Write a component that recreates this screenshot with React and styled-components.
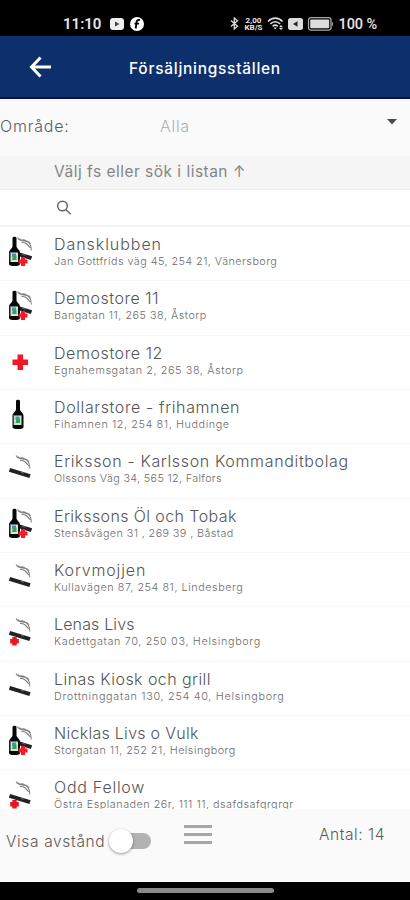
import React from 'react';
import styled, { createGlobalStyle } from 'styled-components';

const GlobalStyle = createGlobalStyle`
  * {
    box-sizing: border-box;
  }

  body {
    margin: 0;
    background: #000;
    font-family: Inter, 'Open Sans', sans-serif;
  }
`;

const Screen = styled.div`
  width: 410px;
  height: 900px;
  display: flex;
  flex-direction: column;
  overflow: hidden;
  background: #fff;
`;

const Text = styled.span`
  letter-spacing: ${({ $track }) => $track || 0}px;
  white-space: nowrap;
`;

const StatusBar = styled.div`
  flex: none;
  height: 36px;
  padding: 11px 33px 0 63px;
  display: flex;
  justify-content: space-between;
  background: #000;
  color: #e6e6e6;
`;

const StatusGroup = styled.div`
  height: 25px;
  display: flex;
  align-items: center;
  gap: ${({ $gap }) => $gap}px;
`;

const Clock = styled(Text)`
  margin-right: 3px;
  font: 600 15px/20px Roboto, sans-serif;
`;

const Battery = styled(Text)`
  margin-top: 2px;
  font: 500 14.5px/20px Roboto, sans-serif;
`;

const Speed = styled.div`
  width: 20px;
  font: 700 8px/7px Roboto, sans-serif;
  text-align: center;
`;

const AppBar = styled.header`
  flex: none;
  height: 63px;
  padding: 0 28px;
  display: grid;
  grid-template-columns: 24px 1fr 24px;
  align-items: center;
  background: #0d2f6c;
  border-bottom: 2px solid #06104f;
  color: #fff;
`;

const AppTitle = styled.h1`
  margin: 3px 0 0;
  font-size: 15.5px;
  font-weight: 500;
  text-align: center;
`;

const Filter = styled.div`
  flex: none;
  height: 57px;
  padding: 0 13px 3px 0;
  display: grid;
  grid-template-columns: 160px 1fr 10px;
  align-items: center;
  background: #fafafa;
  color: #5c5c5c;
  font-size: 16px;
  font-weight: 300;
`;

const FilterValue = styled(Text)`
  color: #b0b0b0;
`;

const Caret = styled.svg`
  margin-top: -8px;
`;

const ListHeader = styled.div`
  flex: none;
  height: 34px;
  padding: 0 0 2px 54px;
  display: flex;
  align-items: center;
  background: #f5f5f5;
  border-bottom: 1px solid #efefef;
  color: #858585;
  font-size: 15.5px;
`;

const Search = styled.div`
  flex: none;
  height: 37px;
  padding-left: 56px;
  display: flex;
  align-items: center;
  border-bottom: 2px solid #f4f4f4;
`;

const List = styled.ul`
  height: 582px;
  margin: 0;
  padding: 0;
  list-style: none;
  overflow: hidden;
`;

const Row = styled.li`
  height: 54.35px;
  display: grid;
  grid-template-columns: 54px 1fr;
  border-bottom: 1px solid #f7f7f7;
`;

const RowIcon = styled.svg`
  margin: 7px 0 0 6px;
`;

const RowText = styled.div`
  padding-top: 7px;
  display: flex;
  flex-direction: column;
`;

const Name = styled(Text)`
  color: #555;
  font-size: 16px;
  font-weight: 300;
  line-height: 20px;
`;

const Address = styled(Text)`
  margin-top: 1px;
  color: #6c6c6c;
  font-size: 10.8px;
  font-weight: 300;
  line-height: 14px;
`;

const Footer = styled.footer`
  flex: none;
  height: 73px;
  padding: 0 25px 0 6px;
  display: grid;
  grid-template-columns: 104px 74px 30px 1fr;
  align-items: start;
  background: #fafafa;
  color: #5a5a5a;
  font-size: 15.5px;
  font-weight: 300;
`;

const FooterLabel = styled(Text)`
  margin-top: ${({ $top }) => $top}px;
  line-height: 20px;
  text-align: ${({ $align }) => $align || 'left'};
`;

const Switch = styled.div`
  width: 42px;
  height: 26px;
  margin-top: 19px;
  padding: 5px 0;
`;

const SwitchTrack = styled.div`
  width: 34px;
  height: 16px;
  margin-left: 7px;
  display: flex;
  align-items: center;
  border-radius: 8px;
  background: #b2b2b2;
`;

const SwitchThumb = styled.div`
  flex: none;
  width: 24px;
  height: 24px;
  margin-left: -8px;
  border-radius: 50%;
  background: #fff;
  box-shadow: 0 1px 3px rgba(0, 0, 0, 0.4);
`;

const Menu = styled.div`
  width: 28px;
  margin-top: 16px;
  display: flex;
  flex-direction: column;
  gap: 5px;
`;

const MenuLine = styled.div`
  height: 3px;
  background: #a6a6a6;
`;

const NavBar = styled.div`
  flex: none;
  height: 18px;
  padding-top: 6px;
  display: flex;
  justify-content: center;
  background: #000;
`;

const NavHandle = styled.div`
  width: 137px;
  height: 5px;
  border-radius: 3px;
  background: #898989;
`;

const stores = [
  { name: 'Dansklubben', track: 0.95, address: 'Jan Gottfrids väg 45, 254 21, Vänersborg', addressTrack: 0.45, kind: 'all' },
  { name: 'Demostore 11', track: 0.55, address: 'Bangatan 11, 265 38, Åstorp', addressTrack: 0.5, kind: 'all' },
  { name: 'Demostore 12', track: 0.58, address: 'Egnahemsgatan 2, 265 38, Åstorp', addressTrack: 0.6, kind: 'cross' },
  { name: 'Dollarstore - frihamnen', track: 0.62, address: 'Fihamnen 12, 254 81, Huddinge', addressTrack: 0.6, kind: 'bottle' },
  { name: 'Eriksson - Karlsson Kommanditbolag', track: 0.65, address: 'Olssons Väg 34, 565 12, Falfors', addressTrack: 0.33, kind: 'smoke' },
  { name: 'Erikssons Öl och Tobak', track: 0.4, address: 'Stensåvägen 31 , 269 39 , Båstad', addressTrack: 0.4, kind: 'all' },
  { name: 'Korvmojjen', track: 0.84, address: 'Kullavägen 87, 254 81, Lindesberg', addressTrack: 0.55, kind: 'smoke' },
  { name: 'Lenas Livs', track: 0.15, address: 'Kadettgatan 70, 250 03, Helsingborg', addressTrack: 0.66, kind: 'smokeCross' },
  { name: 'Linas Kiosk och grill', track: 0.43, address: 'Drottninggatan 130, 254 40, Helsingborg', addressTrack: 0.7, kind: 'smoke' },
  { name: 'Nicklas Livs o Vulk', track: 0.28, address: 'Storgatan 11, 252 21, Helsingborg', addressTrack: 0.47, kind: 'all' },
  { name: 'Odd Fellow', track: 0.74, address: 'Östra Esplanaden 26r, 111 11, dsafdsafgrgrgr', addressTrack: 0.5, kind: 'smokeCross' },
];

const Cigarette = () => (
  <g>
    <path d="M3.5 17.8 L24 24.2" stroke="#222" strokeWidth="4" />
    <path d="M15 20.3 L18 21.2" stroke="#666" strokeWidth="1.2" />
    <path
      d="M10 3.5 C12 7 14 7 16.5 7 C21 7 23.8 9.5 23.8 16.5 M12 4.5 C14 8 15 4.5 18 6.5 C20 8.5 21 6 23 10 M14 8.5 C18 8 20 10.5 22.8 14"
      fill="none"
      stroke="#808080"
      strokeWidth="1.1"
    />
  </g>
);

const Bottle = ({ x }) => (
  <g transform={`translate(${x} 0)`}>
    <path
      d="M3.5 4 Q3.5 2.8 5.5 2.8 Q7.5 2.8 7.5 4 V12 C7.5 15 11 15.5 11 19 V30 Q11 32 5.5 32 Q0 32 0 30 V19 C0 15.5 3.5 15 3.5 12 Z"
      fill="#070707"
    />
    <path d="M1.5 18.5 H9 V28 H1.5 Z" fill="#cfe7dc" />
    <path d="M3 19.5 H7 V23 H3 Z" fill="#4596ac" />
    <path d="M4 22 L7.5 21.5 V26 H3 Z" fill="#39a24d" />
    <path d="M1.2 17.5 V28" stroke="#777" strokeWidth="0.7" />
  </g>
);

const StoreIcon = ({ kind }) => (
  <RowIcon width="30" height="36" viewBox="0 0 30 36">
    {(kind === 'smoke' || kind === 'smokeCross') && (
      <g transform="translate(0 1)">
        <Cigarette />
      </g>
    )}
    {kind === 'all' && (
      <g transform="translate(1.5 0)">
        <Cigarette />
      </g>
    )}
    {kind === 'all' && <Bottle x={3} />}
    {kind === 'bottle' && <Bottle x={6.5} />}
    {kind === 'all' && <path d="M17 23 V32 M12.5 27.5 H21.5" stroke="#f5192b" strokeWidth="4" />}
    {kind === 'smokeCross' && <path d="M8.5 22.9 V31.5 M4.2 27.2 H12.8" stroke="#eb1522" strokeWidth="4.4" />}
    {kind === 'cross' && <path d="M14.3 11.5 V27 M6.5 19.2 H22" stroke="#ef1824" strokeWidth="5.6" />}
  </RowIcon>
);

const StoreRow = ({ store }) => (
  <Row>
    <StoreIcon kind={store.kind} />
    <RowText>
      <Name $track={store.track}>{store.name}</Name>
      <Address $track={store.addressTrack}>{store.address}</Address>
    </RowText>
  </Row>
);

const Status = () => (
  <StatusBar>
    <StatusGroup $gap={6}>
      <Clock>11:10</Clock>
      <svg width="14" height="12" viewBox="0 0 14 12">
        <rect width="14" height="12" rx="3" fill="#eee" />
        <path d="M5 3.5 L9.5 6 L5 8.5 Z" fill="#444" />
      </svg>
      <svg width="14" height="14" viewBox="0 0 14 14">
        <circle cx="7" cy="7" r="7" fill="#fff" />
        <path d="M10 3 C7 2.5 6.5 4 6.5 6 L5.7 11.5 M4.5 6.7 H9" fill="none" stroke="#000" strokeWidth="1.8" />
      </svg>
    </StatusGroup>
    <StatusGroup $gap={4}>
      <svg width="9" height="13" viewBox="0 0 9 13">
        <path d="M1 3.5 L7.5 9.3 L4.3 12 V1 L7.5 3.7 L1 9.5" fill="none" stroke="#ddd" strokeWidth="1.3" />
      </svg>
      <Speed>2,00 KB/S</Speed>
      <svg width="17" height="13" viewBox="0 0 17 13">
        <path
          d="M1 4.5 C5 0 11.5 0 15.5 4.5 M3.3 7 C6 4 10.5 4 13.2 7 M5.7 9.3 C7.3 7.8 9.2 7.8 10.8 9.3"
          fill="none"
          stroke="#ddd"
          strokeWidth="1.6"
        />
        <path d="M8.2 12.5 L6.5 10.5 H10 Z M14 8 L16 10.3 H12 Z M14 13 L12 11 H16 Z" fill="#ddd" />
      </svg>
      <svg width="15" height="12" viewBox="0 0 15 12">
        <rect width="15" height="12" rx="2.5" fill="#ddd" />
        <path d="M5 6 L9.5 3.2 V8.8 Z" fill="#222" />
      </svg>
      <svg width="27" height="14" viewBox="0 0 27 14">
        <rect x="1.5" y="0.7" width="22.5" height="12.4" rx="2.5" fill="none" stroke="#aaa" strokeWidth="1.3" />
        <rect x="3.2" y="2.5" width="19" height="8.8" rx="1" fill="#ddd" />
        <path d="M25 4.5 Q27 7 25 9.5 Z" fill="#bbb" />
      </svg>
      <Battery $track={-0.1}>100 %</Battery>
    </StatusGroup>
  </StatusBar>
);

const App = () => (
  <>
    <GlobalStyle />
    <Screen>
      <Status />
      <AppBar>
        <svg width="24" height="22" viewBox="0 0 24 22">
          <path d="M12.5 1.5 L3.5 11 L12.5 20.5 M4 11 H23" fill="none" stroke="#fff" strokeWidth="3" />
        </svg>
        <AppTitle>
          <Text $track={0.72}>Försäljningsställen</Text>
        </AppTitle>
      </AppBar>
      <Filter>
        <Text $track={0.8}>Område:</Text>
        <FilterValue $track={0.7}>Alla</FilterValue>
        <Caret width="10" height="6" viewBox="0 0 10 6">
          <path d="M0 0 H10 L5 5.5 Z" fill="#4a4a4a" />
        </Caret>
      </Filter>
      <ListHeader>
        <Text $track={0.48}>Välj fs eller sök i listan ↑</Text>
      </ListHeader>
      <Search>
        <svg width="16" height="16" viewBox="0 0 16 16" fill="none" stroke="#666" strokeWidth="1.5">
          <circle cx="6.5" cy="6" r="4.8" />
          <path d="M10 9.7 L14.8 14.3" />
        </svg>
      </Search>
      <List>
        {stores.map((store) => (
          <StoreRow key={store.name} store={store} />
        ))}
      </List>
      <Footer>
        <FooterLabel $top={23} $track={0.65}>Visa avstånd</FooterLabel>
        <Switch>
          <SwitchTrack>
            <SwitchThumb />
          </SwitchTrack>
        </Switch>
        <Menu>
          <MenuLine />
          <MenuLine />
          <MenuLine />
        </Menu>
        <FooterLabel $top={16} $track={0.55} $align="right">Antal: 14</FooterLabel>
      </Footer>
      <NavBar>
        <NavHandle />
      </NavBar>
    </Screen>
  </>
);

export default App;
